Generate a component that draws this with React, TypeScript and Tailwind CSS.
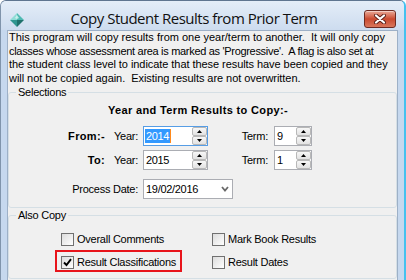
import type { ReactNode } from "react";

const intro = [
  { text: "This program will copy results from one year/term to another.  It will only copy", track: "tracking-[0px]" },
  { text: "classes whose assessment area is marked as 'Progressive'.  A flag is also set at", track: "tracking-[-0.31px]" },
  { text: "the student class level to indicate that these results have been copied and they", track: "tracking-[-0.06px]" },
  { text: "will not be copied again.  Existing results are not overwritten.", track: "tracking-[-0.05px]" },
];

// small gem icon in the title bar
function AppIcon() {
  return (
    <svg width="14" height="14" viewBox="0 0 14 14">
      <polygon points="7,0 7,7 0,7" fill="#8fdcd6" />
      <polygon points="7,0 14,7 7,7" fill="#4fb9b2" />
      <polygon points="0,7 7,7 7,14" fill="#2f9690" />
      <polygon points="7,7 14,7 7,14" fill="#1f716c" />
      <polygon points="7,2 9,5 7,6 5,5" fill="#d8f5f2" opacity="0.8" />
    </svg>
  );
}

function CloseButton() {
  return (
    <div className="flex h-[18px] w-[32px] items-center justify-center rounded-[3px] border border-[#6e2b22] bg-gradient-to-b from-[#e9a897] via-[#c9492f] to-[#d9765b] shadow-[inset_0_1px_0_rgba(255,255,255,0.45)]">
      <svg width="12" height="10" viewBox="0 0 12 10">
        <path d="M2 1.5 L10 8.5 M10 1.5 L2 8.5" stroke="#5a2019" strokeWidth="4" strokeLinecap="round" />
        <path d="M2 1.5 L10 8.5 M10 1.5 L2 8.5" stroke="#ffffff" strokeWidth="2.2" strokeLinecap="round" />
      </svg>
    </div>
  );
}

function SpinButtons() {
  return (
    <div className="flex w-[15px] flex-col">
      <div className="flex h-[9px] items-center justify-center rounded-[2px] border border-[#b8b8b8] bg-gradient-to-b from-[#f7f7f7] to-[#e2e2e2]">
        <svg width="5" height="3" viewBox="0 0 5 3">
          <path d="M2.5 0 L5 3 L0 3 Z" fill="#000" />
        </svg>
      </div>
      <div className="flex h-[9px] items-center justify-center rounded-[2px] border border-[#b8b8b8] bg-gradient-to-b from-[#f7f7f7] to-[#e2e2e2]">
        <svg width="5" height="3" viewBox="0 0 5 3">
          <path d="M0 0 L5 0 L2.5 3 Z" fill="#000" />
        </svg>
      </div>
    </div>
  );
}

interface SpinBoxProps {
  value: string;
  width: string;
  focused?: boolean;
}

function SpinBox({ value, width, focused }: SpinBoxProps) {
  return (
    <div
      className={`flex h-[20px] bg-white ${width} border ${
        focused ? "border-[#569de5]" : "border-[#abadb3]"
      }`}
    >
      <div className="flex flex-1 items-center pl-[1px] tracking-[-0.4px]">
        {focused ? (
          <span className="border-r border-[#ff8a1c] bg-[#3399ff] px-[1px] leading-[14px] text-white">
            {value}
          </span>
        ) : (
          <span className="pl-[1px]">{value}</span>
        )}
      </div>
      <SpinButtons />
    </div>
  );
}

function CheckBox({ label, checked }: { label: string; checked?: boolean }) {
  return (
    <div className="flex h-[13px] items-center gap-[3px]">
      <div className="flex h-[13px] w-[13px] items-center justify-center border border-[#707070] bg-gradient-to-br from-[#dcdcdc] to-white">
        {checked && (
          <svg width="9" height="9" viewBox="0 0 9 9">
            <polyline points="1,4.5 3.5,7 8,1.2" fill="none" stroke="#000" strokeWidth="1.9" />
          </svg>
        )}
      </div>
      <span className="leading-[13px] tracking-[-0.25px]">{label}</span>
    </div>
  );
}

function GroupBox({ title, children, className }: { title: string; children: ReactNode; className: string }) {
  return (
    <fieldset className={`rounded-[3px] border border-[#d5dfe5] ${className}`}>
      <legend className="ml-[7px] px-[2px] leading-[13px] tracking-[-0.25px]">{title}</legend>
      {children}
    </fieldset>
  );
}

export default function App() {
  return (
    <div className="h-[280px] w-[406px] overflow-hidden bg-white font-['Liberation_Sans',Arial,sans-serif] text-[11px] text-black">
      <div className="flex h-[300px] flex-col overflow-hidden rounded-t-[6px] border-l border-r-2 border-t border-l-[#8094ab] border-r-[#45c1ef] border-t-[#5f7590] bg-[#c6d8ee]">
        {/* title bar */}
        <div className="flex h-[29px] items-start bg-gradient-to-b from-[#e4edf8] to-[#cddcef] pl-[9px] pr-[8px]">
          <div className="mt-[12px]">
            <AppIcon />
          </div>
          <div className="mt-[7px] flex-1 text-center font-['Open_Sans',sans-serif] text-[15px] leading-[20px] tracking-[-0.5px] text-[#111]">
            Copy Student Results from Prior Term
          </div>
          <div className="mt-[9px]">
            <CloseButton />
          </div>
        </div>

        {/* client area */}
        <div className="flex flex-1 px-[6px]">
          <div className="flex-1 border-l border-r border-t border-[#9db0c7] bg-[#f0f0f0]">
            <div className="pl-[1px] leading-[13.5px]">
              {intro.map((line) => (
                <div key={line.text} className={`whitespace-pre ${line.track}`}>
                  {line.text}
                </div>
              ))}
            </div>

            <GroupBox title="Selections" className="mt-[1px] pb-[8px]">
              <div className="pl-[99px] pt-[5px] font-bold leading-[13px] tracking-[0.35px]">
                Year and Term Results to Copy:-
              </div>

              <div className="mt-[9px] flex h-[20px] items-center">
                <span className="w-[96px] text-right font-bold tracking-[0.35px]">From:-</span>
                <span className="w-[33px] text-right tracking-[-0.25px]">Year:</span>
                <div className="ml-[5px]">
                  <SpinBox value="2014" width="w-[65px]" focused />
                </div>
                <span className="w-[60px] text-right tracking-[-0.25px]">Term:</span>
                <div className="ml-[6px]">
                  <SpinBox value="9" width="w-[38px]" />
                </div>
              </div>

              <div className="mt-[4px] flex h-[20px] items-center">
                <span className="w-[96px] text-right font-bold tracking-[0.35px]">To:</span>
                <span className="w-[33px] text-right tracking-[-0.25px]">Year:</span>
                <div className="ml-[5px]">
                  <SpinBox value="2015" width="w-[65px]" />
                </div>
                <span className="w-[60px] text-right tracking-[-0.25px]">Term:</span>
                <div className="ml-[6px]">
                  <SpinBox value="1" width="w-[38px]" />
                </div>
              </div>

              <div className="mt-[9px] flex h-[20px] items-center">
                <span className="w-[129px] text-right tracking-[-0.25px]">Process Date:</span>
                <div className="ml-[5px] flex h-[20px] w-[90px] items-center justify-between border border-[#abadb3] bg-white pl-[2px] pr-[3px]">
                  <span className="tracking-[-0.3px]">19/02/2016</span>
                  <svg width="8" height="6" viewBox="0 0 8 6">
                    <path d="M1 1 L4 4.5 L7 1" fill="none" stroke="#6a6a6a" strokeWidth="1.8" />
                  </svg>
                </div>
              </div>
            </GroupBox>

            <GroupBox title="Also Copy" className="mt-[1px] pb-[9px]">
              <div className="mt-[11px] grid grid-cols-[151px_auto] gap-y-[10px] pl-[52px]">
                <CheckBox label="Overall Comments" />
                <CheckBox label="Mark Book Results" />
                <div className="-mb-[3px] -ml-[6px] -mt-[6px] w-fit border-2 border-[#e8141b] px-[4px] pb-[1px] pt-[4px]">
                  <CheckBox label="Result Classifications" checked />
                </div>
                <CheckBox label="Result Dates" />
              </div>
            </GroupBox>
          </div>
        </div>
      </div>
    </div>
  );
}
